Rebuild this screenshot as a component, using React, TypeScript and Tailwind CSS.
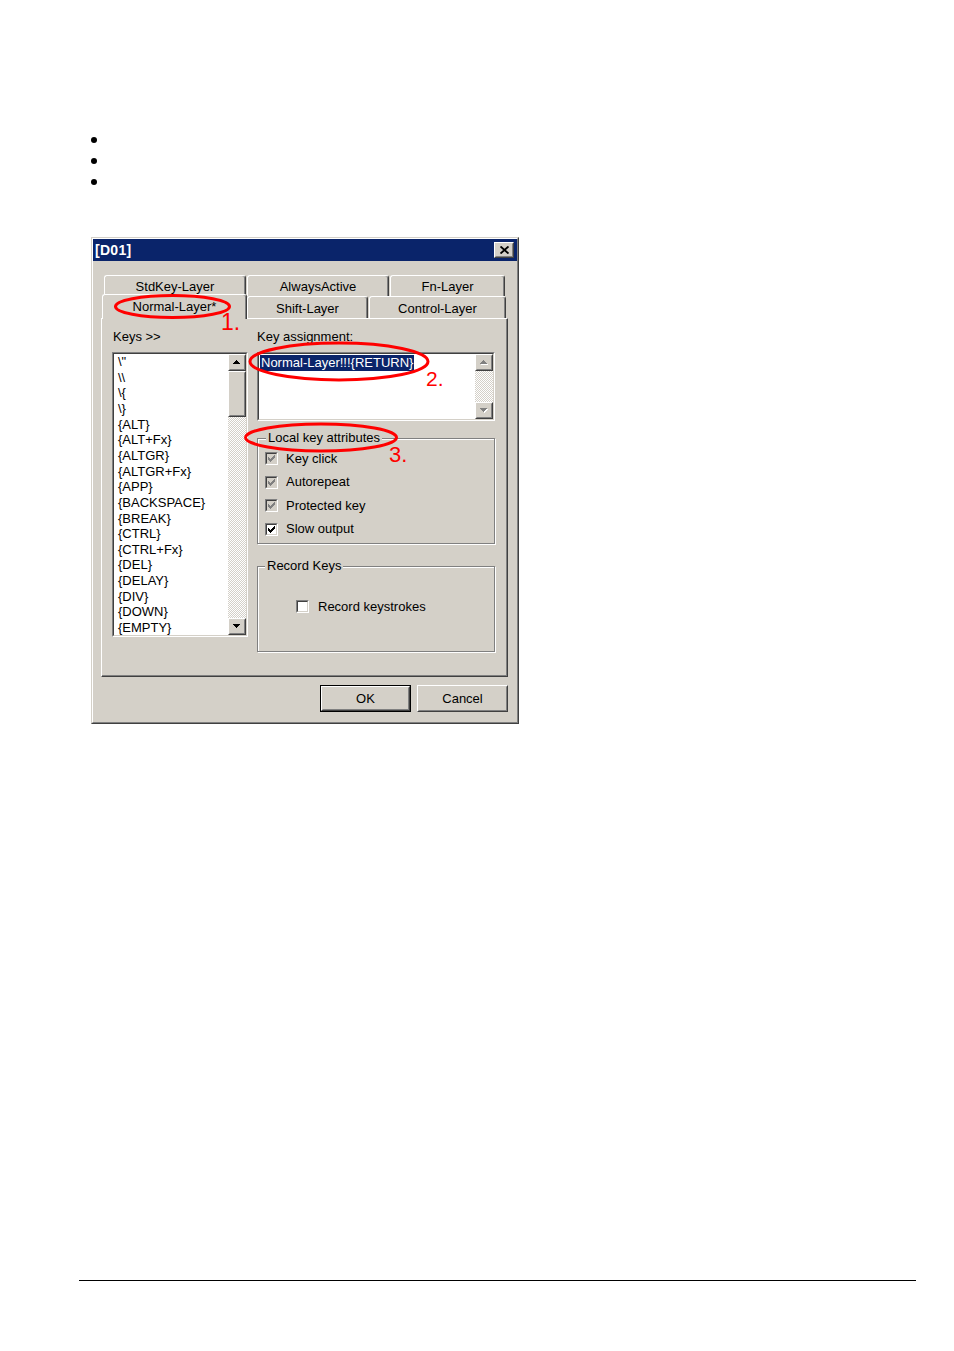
import React from "react";

type Kids = { className?: string; inner?: string; children?: React.ReactNode };

function Raised({ className = "", inner = "", children }: Kids) {
  return (
    <div className={"border border-t-white border-l-white border-r-[#404040] border-b-[#404040] " + className}>
      <div className={"w-full h-full border border-t-[#d4d0c8] border-l-[#d4d0c8] border-r-[#808080] border-b-[#808080] bg-[#d4d0c8] " + inner}>
        {children}
      </div>
    </div>
  );
}

function Sunken({ className = "", inner = "", children }: Kids) {
  return (
    <div className={"border border-t-[#808080] border-l-[#808080] border-r-white border-b-white " + className}>
      <div className={"w-full h-full border border-t-[#404040] border-l-[#404040] border-r-[#d4d0c8] border-b-[#d4d0c8] " + inner}>
        {children}
      </div>
    </div>
  );
}

function Arrow({ dir, disabled }: { dir: "up" | "down"; disabled?: boolean }) {
  const rows = dir === "up" ? [[3, 1], [2, 3], [1, 5], [0, 7]] : [[0, 7], [1, 5], [2, 3], [3, 1]];
  return (
    <svg width="8" height="5" viewBox="0 0 8 5" shapeRendering="crispEdges" className="block">
      {disabled &&
        rows.map(([x, w], i) => <rect key={"s" + i} x={x + 1} y={i + 1} width={w} height={1} fill="#ffffff" />)}
      {rows.map(([x, w], i) => (
        <rect key={i} x={x} y={i} width={w} height={1} fill={disabled ? "#808080" : "#000000"} />
      ))}
    </svg>
  );
}

function ScrollBtn({ dir, disabled }: { dir: "up" | "down"; disabled?: boolean }) {
  return (
    <Raised className="w-[18px] h-[17px] shrink-0" inner="flex items-center justify-center">
      <Arrow dir={dir} disabled={disabled} />
    </Raised>
  );
}

function CheckBox({ checked, disabled }: { checked?: boolean; disabled?: boolean }) {
  const cols: [number, number][] = [
    [1, 3],
    [2, 4],
    [3, 5],
    [4, 4],
    [5, 3],
    [6, 2],
    [7, 1],
  ];
  return (
    <Sunken className="w-[13px] h-[13px] shrink-0" inner={disabled ? "bg-[#d4d0c8]" : "bg-white"}>
      {checked && (
        <svg width="9" height="9" viewBox="0 0 9 9" shapeRendering="crispEdges" className="block">
          {cols.map(([x, y]) => (
            <rect key={x} x={x} y={y} width={1} height={3} fill={disabled ? "#808080" : "#000000"} />
          ))}
        </svg>
      )}
    </Sunken>
  );
}

const keys = [
  '\\"',
  "\\\\",
  "\\{",
  "\\}",
  "{ALT}",
  "{ALT+Fx}",
  "{ALTGR}",
  "{ALTGR+Fx}",
  "{APP}",
  "{BACKSPACE}",
  "{BREAK}",
  "{CTRL}",
  "{CTRL+Fx}",
  "{DEL}",
  "{DELAY}",
  "{DIV}",
  "{DOWN}",
  "{EMPTY}",
];

const tabBase =
  "flex items-center justify-center border-t border-l border-r border-t-white border-l-white border-r-[#404040] rounded-tl-[3px] rounded-tr-[3px] bg-[#d4d0c8] shadow-[inset_-1px_0_0_#808080] text-[13px] leading-none";

const track =
  "bg-[image:repeating-conic-gradient(#ffffff_0%_25%,#d4d0c8_0%_50%)] bg-[length:2px_2px]";

const etched =
  "relative border border-[#808080] shadow-[1px_1px_0_#ffffff,inset_1px_1px_0_#ffffff]";

export default function App() {
  return (
    <div className="relative w-[954px] h-[1351px] bg-white overflow-hidden text-black font-['Liberation_Sans',Arial,sans-serif]">
      <ul className="pt-[129px]">
        {[0, 1, 2].map((i) => (
          <li key={i} className="h-[21.2px] flex items-center pl-[91px]">
            <span className="block w-[6px] h-[6px] rounded-full bg-black" />
          </li>
        ))}
      </ul>

      {/* Dialog */}
      <div className="mt-[44.4px] ml-[91px] w-[428px] h-[487px] bg-[#d4d0c8] border border-t-[#d4d0c8] border-l-[#d4d0c8] border-r-[#404040] border-b-[#404040]">
        <div className="w-full h-full flex flex-col border border-t-white border-l-white border-r-[#808080] border-b-[#808080]">
          {/* Title bar */}
          <div className="h-[22px] shrink-0 bg-[#0a246a] flex items-center justify-between pl-[2px] pr-[3px]">
            <span className="text-white font-bold text-[14px] leading-none tracking-[0.3px]">[D01]</span>
            <Raised className="w-[20px] h-[16px]" inner="flex items-center justify-center">
              <svg width="9" height="8" viewBox="0 0 9 8" className="block">
                <path d="M0.5 0.5 L8.5 7.5 M8.5 0.5 L0.5 7.5" stroke="#000" strokeWidth="1.9" />
              </svg>
            </Raised>
          </div>

          <div className="pl-[8px] pt-[14px]">
            {/* Tab rows */}
            <div className="flex h-[21px] pl-[3px] gap-[1px]">
              <div className={tabBase + " w-[142px] pt-[1px]"}>StdKey-Layer</div>
              <div className={tabBase + " w-[142px] pt-[1px]"}>AlwaysActive</div>
              <div className={tabBase + " w-[115px] pt-[1px]"}>Fn-Layer</div>
            </div>
            <div className="flex h-[22px] items-end pl-[1px]">
              <div className={tabBase + " relative z-10 w-[145px] h-[25px] -mb-px pb-[1px]"}>Normal-Layer*</div>
              <div className={tabBase + " w-[121px] h-[22px] pt-[2px]"}>Shift-Layer</div>
              <div className={tabBase + " w-[137px] h-[22px] ml-[1px] pt-[2px]"}>Control-Layer</div>
            </div>

            {/* Tab panel */}
            <div className="w-[407px] h-[359px] border border-t-white border-l-white border-r-[#404040] border-b-[#404040]">
              <div className="w-full h-full flex border-r border-b border-r-[#808080] border-b-[#808080]">
                {/* Left column */}
                <div className="ml-[10px] flex flex-col">
                  <div className="mt-[10px] h-[16px] leading-[16px] pl-px text-[13px]">Keys &gt;&gt;</div>
                  <Sunken className="mt-[7px] w-[136px] h-[285px]" inner="bg-white flex overflow-hidden">
                    <div className="flex-1 pl-[4px] text-[13px] leading-[15.65px] overflow-hidden">
                      {keys.map((k) => (
                        <div key={k} className="whitespace-pre">{k}</div>
                      ))}
                    </div>
                    <div className="w-[18px] flex flex-col">
                      <ScrollBtn dir="up" />
                      <Raised className="w-[18px] h-[46px] shrink-0" />
                      <div className={"flex-1 " + track} />
                      <ScrollBtn dir="down" />
                    </div>
                  </Sunken>
                </div>

                {/* Right column */}
                <div className="ml-[9px] w-[238px] flex flex-col">
                  <div className="mt-[10px] h-[16px] leading-[16px] text-[13px]">Key assignment:</div>
                  <Sunken className="mt-[7px] w-[238px] h-[69px]" inner="bg-white flex">
                    <div className="flex-1 pl-px pt-px">
                      <div className="w-fit bg-[#0a246a] text-white text-[13px] leading-[16px] px-px whitespace-pre">
                        Normal-Layer!!!{"{RETURN}"}
                      </div>
                    </div>
                    <div className="w-[18px] flex flex-col">
                      <ScrollBtn dir="up" disabled />
                      <div className={"flex-1 " + track} />
                      <ScrollBtn dir="down" disabled />
                    </div>
                  </Sunken>

                  {/* Local key attributes */}
                  <div className={etched + " mt-[17px] h-[106px]"}>
                    <span className="absolute top-[-9px] left-[8px] px-[2px] bg-[#d4d0c8] text-[13px] leading-[16px]">
                      Local key attributes
                    </span>
                    <div className="pt-[8px] pl-[7px] flex flex-col text-[13px]">
                      {[
                        ["Key click", true, true],
                        ["Autorepeat", true, true],
                        ["Protected key", true, true],
                        ["Slow output", true, false],
                      ].map(([label, checked, disabled]) => (
                        <div key={label as string} className="h-[23.5px] flex items-center gap-[8px]">
                          <CheckBox checked={checked as boolean} disabled={disabled as boolean} />
                          <span>{label as string}</span>
                        </div>
                      ))}
                    </div>
                  </div>

                  {/* Record Keys */}
                  <div className={etched + " mt-[22px] h-[86px]"}>
                    <span className="absolute top-[-9px] left-[7px] px-[2px] bg-[#d4d0c8] text-[13px] leading-[16px]">
                      Record Keys
                    </span>
                    <div className="pt-[28px] pl-[38px] text-[13px]">
                      <div className="h-[23px] flex items-center gap-[9px]">
                        <CheckBox />
                        <span>Record keystrokes</span>
                      </div>
                    </div>
                  </div>
                </div>
              </div>
            </div>
          </div>

          {/* Buttons */}
          <div className="flex justify-end gap-[6px] pr-[9px] mt-[8px]">
            <div className="w-[91px] h-[27px] border border-black">
              <Raised className="w-full h-full" inner="flex items-center justify-center text-[13px]">
                OK
              </Raised>
            </div>
            <Raised className="w-[91px] h-[27px]" inner="flex items-center justify-center text-[13px]">
              Cancel
            </Raised>
          </div>
        </div>
      </div>

      <div className="mt-[556px] ml-[79px] w-[837px] h-px bg-black" />

      {/* Red annotations */}
      <svg
        className="absolute top-0 left-0 z-20 pointer-events-none"
        width="954"
        height="1351"
        viewBox="0 0 954 1351"
      >
        <ellipse cx="172.5" cy="306.5" rx="57" ry="11" fill="none" stroke="#ff0000" strokeWidth="3" />
        <ellipse cx="339" cy="361.5" rx="89" ry="18.5" fill="none" stroke="#ff0000" strokeWidth="3" />
        <ellipse cx="321" cy="437.5" rx="75.5" ry="13.5" fill="none" stroke="#ff0000" strokeWidth="3" />
      </svg>
      <div className="absolute z-20 left-[221px] top-[311px] text-[#ff0000] text-[23px] leading-none">1.</div>
      <div className="absolute z-20 left-[426px] top-[368px] text-[#ff0000] text-[21px] leading-none">2.</div>
      <div className="absolute z-20 left-[389px] top-[444px] text-[#ff0000] text-[22px] leading-none">3.</div>
    </div>
  );
}
